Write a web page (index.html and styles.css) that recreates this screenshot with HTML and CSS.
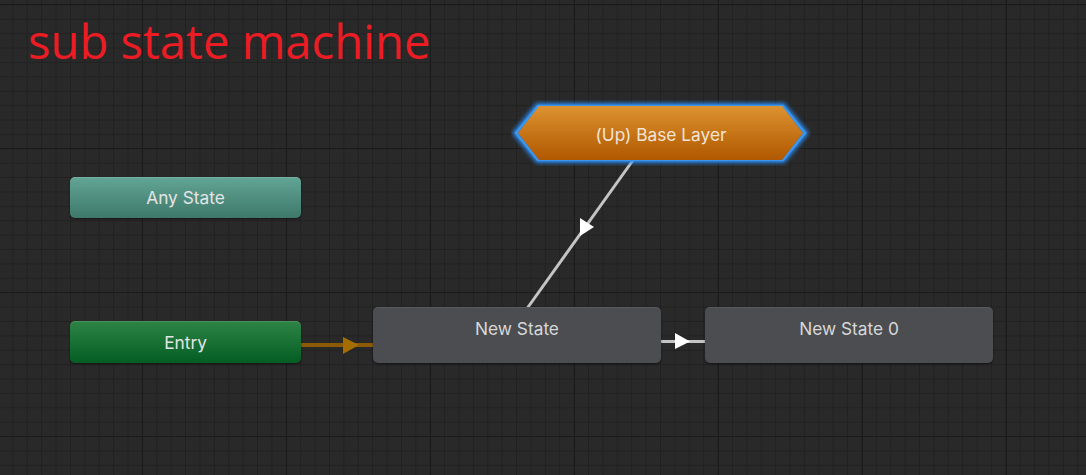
FILE: index.html
```html
<!DOCTYPE html>
<html lang="en">
<head>
<meta charset="utf-8">
<title>sub state machine</title>
<link rel="stylesheet" href="styles.css">
</head>
<body>
<main class="canvas">
  <h1 class="title">sub state machine</h1>

  <svg class="edges" width="1086" height="475" viewBox="0 0 1086 475">
    <line x1="526" y1="310" x2="636" y2="156" class="edge-light"/>
    <polygon points="580,218 580,236 594,227" class="arrow-light"/>
    <line x1="300" y1="345" x2="374" y2="345" class="edge-entry"/>
    <polygon points="343,337 343,354 359,345" class="arrow-entry"/>
    <line x1="660" y1="341.5" x2="706" y2="341.5" class="edge-light"/>
    <polygon points="675,333 675,349 690,341.5" class="arrow-light"/>
  </svg>

  <div class="node node-any">Any State</div>
  <div class="node node-entry">Entry</div>
  <div class="node node-state node-s1">New State</div>
  <div class="node node-state node-s2">New State 0</div>

  <div class="node node-up">
    <svg class="hex" width="300" height="66" viewBox="0 0 300 66">
      <defs>
        <linearGradient id="orange" x1="0" y1="0" x2="0" y2="1">
          <stop offset="0" stop-color="#dd9230"/>
          <stop offset="1" stop-color="#b05800"/>
        </linearGradient>
        <filter id="glow" x="-10%" y="-40%" width="120%" height="180%">
          <feGaussianBlur stdDeviation="2"/>
        </filter>
      </defs>
      <polygon points="27,6 272,6 294,33 272,60 27,60 5,33" class="hex-glow" filter="url(#glow)"/>
      <polygon points="27,6 272,6 294,33 272,60 27,60 5,33" class="hex-ring"/>
      <polygon points="28,6 271,6 292,33 271,60 28,60 7,33" fill="url(#orange)"/>
    </svg>
    <span class="up-label">(Up) Base Layer</span>
  </div>
</main>
</body>
</html>
```

FILE: styles.css
```css
html, body {
  margin: 0;
  padding: 0;
  background: #292929;
}

.canvas {
  position: relative;
  width: 1086px;
  height: 475px;
  overflow: hidden;
  background-color: #292929;
  background-image:
    linear-gradient(to right, #1b1b1b 1px, transparent 1px),
    linear-gradient(to bottom, #1b1b1b 1px, transparent 1px),
    linear-gradient(to right, #212121 1px, transparent 1px),
    linear-gradient(to bottom, #212121 1px, transparent 1px);
  background-size: 144px 144px, 144px 144px, 14.4px 14.4px, 14.4px 14.4px;
  background-position: 142px 0, 0 4px, 12.4px 0, 0 4.4px;
  font-family: Inter, "Noto Sans", sans-serif;
}

.title {
  margin: 0;
  padding: 11px 0 0 28px;
  font-family: "Open Sans", "Noto Sans", sans-serif;
  font-weight: 400;
  font-size: 47.2px;
  line-height: 60px;
  color: #ec1c24;
}

.edges {
  position: absolute;
  left: 0;
  top: 0;
}

.edge-light {
  stroke: #c4c4c4;
  stroke-width: 3;
}

.arrow-light {
  fill: #ffffff;
}

.edge-entry {
  stroke: #8a5a04;
  stroke-width: 4;
}

.arrow-entry {
  fill: #a56c00;
}

.node {
  position: absolute;
  box-sizing: border-box;
  display: flex;
  justify-content: center;
  align-items: center;
  font-size: 17.3px;
  color: #e4e4e4;
  border-radius: 5px;
}

.node-any {
  left: 70px;
  top: 177px;
  width: 231px;
  height: 41px;
  background: linear-gradient(#62a595, #3e796b);
  box-shadow: inset 0 1px 0 rgba(255,255,255,0.12), 0 1px 2px rgba(0,0,0,0.5);
}

.node-entry {
  left: 70px;
  top: 321px;
  width: 231px;
  height: 42px;
  background: linear-gradient(#2d8445, #045d23);
  box-shadow: inset 0 1px 0 rgba(255,255,255,0.12), 0 1px 2px rgba(0,0,0,0.5);
}

.node-state {
  top: 307px;
  width: 288px;
  height: 56px;
  align-items: flex-start;
  padding-top: 11px;
  background: #4b4d51;
  color: #d8d8d8;
  box-shadow: inset 0 1px 0 rgba(255,255,255,0.08), 0 1px 2px rgba(0,0,0,0.5);
}

.node-s1 { left: 373px; }
.node-s2 { left: 705px; }

.node-up {
  left: 511px;
  top: 100px;
  width: 300px;
  height: 66px;
  padding-top: 3px;
  border-radius: 0;
}

.hex {
  position: absolute;
  left: 0;
  top: 0;
}

.hex-glow {
  fill: none;
  stroke: #2a8af2;
  stroke-width: 6;
}

.hex-ring {
  fill: none;
  stroke: #3a96ee;
  stroke-width: 2.5;
}

.up-label {
  position: relative;
  color: #f0e4d8;
}
```
